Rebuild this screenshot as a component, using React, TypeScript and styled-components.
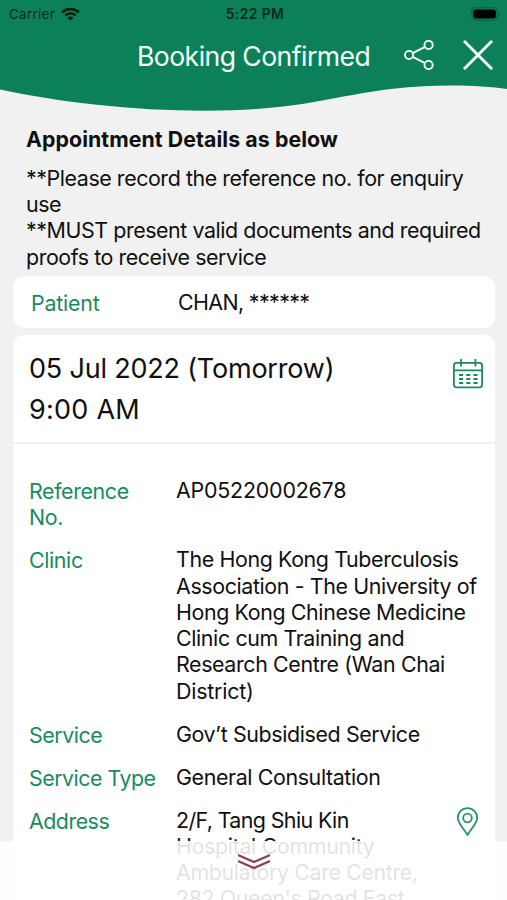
import React from "react";
import styled, { createGlobalStyle } from "styled-components";

const GREEN = "#0c8159";

const GlobalStyle = createGlobalStyle`
  * { box-sizing: border-box; }
  body {
    margin: 0;
    background: #f1f1f1;
    font-family: Inter, "Liberation Sans", sans-serif;
    color: #101010;
    overflow: hidden;
  }
  h1, h2, p, dl, dt, dd { margin: 0; font-weight: 400; }
`;

const Screen = styled.main`
  position: relative;
  display: flex;
  flex-direction: column;
  width: 507px;
  height: 900px;
  overflow: hidden;
  background: #f1f1f1;
`;

const Header = styled.header`
  display: grid;
  grid-template-columns: minmax(0, 1fr);
  grid-template-rows: 28px 56px 42px;
  height: 126px;
  flex: none;
`;

const StatusBar = styled.div`
  display: grid;
  grid-template-columns: 1fr auto 1fr;
  align-items: center;
  padding: 0 6px 0 9px;
  background: ${GREEN};
  color: #06291c;
`;

const Carrier = styled.div`
  display: flex;
  align-items: center;
  gap: 6px;
  font-size: 13.5px;
  letter-spacing: 0.25px;
`;

const Clock = styled.div`
  font-size: 13.8px;
  font-weight: 600;
  letter-spacing: 0.45px;
`;

const Battery = styled.svg`
  justify-self: end;
`;

const TitleBar = styled.div`
  display: grid;
  grid-template-columns: minmax(0, 1fr) 30px 30px;
  column-gap: 29px;
  align-items: center;
  padding: 0 14px 0 137px;
  background: ${GREEN};
  color: #f4fffa;
`;

const Title = styled.h1`
  font-size: 26.6px;
  line-height: 34px;
  letter-spacing: -0.56px;
  white-space: nowrap;
`;

const Wave = styled.svg`
  display: block;
`;

const IconButton = styled.button`
  display: flex;
  padding: 0;
  border: 0;
  background: none;
  color: inherit;
`;

const HeaderButton = styled(IconButton)`
  margin-top: -2px;
`;

const Notice = styled.section`
  padding: 0 12px 0 26px;
  height: 150px;
  flex: none;
`;

const NoticeTitle = styled.h2`
  font-size: 21.3px;
  line-height: 27px;
  font-weight: 700;
  letter-spacing: 0.08px;
`;

const NoticeText = styled.p`
  font-size: 21.4px;
  line-height: 26.2px;
  letter-spacing: -0.43px;
`;

const NoticeBody = styled.div`
  padding-top: 12px;
`;

const Card = styled.section`
  margin: 0 12px 0 13px;
  background: #fff;
  flex: none;
`;

const PatientCard = styled(Card)`
  display: grid;
  grid-template-columns: 147px 1fr;
  align-items: center;
  height: 52px;
  padding: 0 18px;
  border-radius: 11px;
  font-size: 21.4px;
  letter-spacing: -0.2px;
`;

const PatientName = styled.span`
  letter-spacing: -0.62px;
`;

const DateCard = styled(Card)`
  display: flex;
  justify-content: space-between;
  height: 109px;
  margin-top: 7px;
  padding: 13px 11px 0 16px;
  border-radius: 11px 11px 0 0;
  border-bottom: 2px solid #f2f2f2;
`;

const DateText = styled.div`
  font-size: 27px;
  line-height: 41px;
`;

const CalendarIcon = styled.svg`
  margin-top: 10px;
`;

const DetailsCard = styled(Card)`
  height: 470px;
  padding: 33px 11px 0 16px;
`;

const Details = styled.dl`
  display: flex;
  flex-direction: column;
  gap: 16.8px;
  font-size: 21.4px;
  line-height: 26.25px;
`;

const Row = styled.div`
  display: grid;
  grid-template-columns: 147px 1fr auto;
`;

const Label = styled.dt`
  color: #1b8a60;
  padding-top: 1px;
  margin-bottom: -1px;
`;

const Value = styled.dd``;

const Line = styled.span<{ $tracking?: number }>`
  display: block;
  white-space: nowrap;
  letter-spacing: ${(p) => p.$tracking ?? -0.38}px;
`;

const ScrollHint = styled.div`
  position: absolute;
  left: 0;
  right: 0;
  bottom: 0;
  height: 59px;
  display: flex;
  justify-content: center;
  padding-top: 12px;
  background: rgba(255, 255, 255, 0.88);
`;

type TextLine = { text: string; tracking?: number };
type Detail = { label: TextLine[]; value: TextLine[]; pin?: boolean };

const details: Detail[] = [
  {
    label: [{ text: "Reference" }, { text: "No." }],
    value: [{ text: "AP05220002678", tracking: -0.2 }],
  },
  {
    label: [{ text: "Clinic" }],
    value: [
      { text: "The Hong Kong Tuberculosis" },
      { text: "Association - The University of" },
      { text: "Hong Kong Chinese Medicine" },
      { text: "Clinic cum Training and" },
      { text: "Research Centre (Wan Chai" },
      { text: "District)", tracking: -0.2 },
    ],
  },
  {
    label: [{ text: "Service", tracking: -0.45 }],
    value: [{ text: "Gov’t Subsidised Service" }],
  },
  {
    label: [{ text: "Service Type", tracking: -0.5 }],
    value: [{ text: "General Consultation" }],
  },
  {
    label: [{ text: "Address", tracking: -0.5 }],
    value: [
      { text: "2/F, Tang Shiu Kin", tracking: -0.6 },
      { text: "Hospital Community", tracking: -0.33 },
      { text: "Ambulatory Care Centre," },
      { text: "282 Queen's Road East" },
    ],
    pin: true,
  },
];

const Lines = ({ lines }: { lines: TextLine[] }) => (
  <>
    {lines.map((l) => (
      <Line key={l.text} $tracking={l.tracking}>
        {l.text}
      </Line>
    ))}
  </>
);

const WifiIcon = () => (
  <svg width="19" height="14" viewBox="0 0 19 14" fill="none" stroke="#03170f">
    <path d="M1.2 5.3C5.8.8 13.2.8 17.8 5.3" strokeWidth="2.5" />
    <path d="M4.3 8.4c2.9-2.8 7.5-2.8 10.4 0" strokeWidth="2.3" />
    <path d="M9.5 13.6 6.6 10.7c1.6-1.5 4.2-1.5 5.8 0z" fill="#03170f" stroke="none" />
  </svg>
);

const PinIcon = () => (
  <svg width="23" height="30" viewBox="0 0 23 30" fill="none" stroke="#259468" strokeWidth="1.8">
    <path d="M11.5 28C8.8 22.5 1.8 17 1.8 10.8a9.7 9.7 0 0 1 19.4 0C21.2 17 14.2 22.5 11.5 28Z" strokeLinejoin="round" />
    <circle cx="11.5" cy="11" r="4.3" />
  </svg>
);

const PinButton = styled(IconButton)`
  height: 30px;
  margin: 0 5px 0 0;
`;

export default function App() {
  return (
    <Screen>
      <GlobalStyle />
      <Header>
        <StatusBar>
          <Carrier>
            Carrier <WifiIcon />
          </Carrier>
          <Clock>5:22 PM</Clock>
          <Battery width="30" height="14" viewBox="0 0 30 14">
            <rect x=".8" y=".8" width="25.6" height="12.4" rx="4" fill="none" stroke="#075b3e" strokeWidth="1.1" />
            <rect x="2.4" y="2.4" width="22.4" height="9.2" rx="2.4" fill="#000" />
            <path d="M28 5v4c1.5-.7 1.5-3.3 0-4z" fill="#075b3e" />
          </Battery>
        </StatusBar>
        <TitleBar>
          <Title>Booking Confirmed</Title>
          <HeaderButton aria-label="Share">
            <svg width="30" height="30" viewBox="0 0 30 30" fill="none" stroke="currentColor" strokeWidth="1.9">
              <circle cx="5.1" cy="15" r="4.1" />
              <circle cx="24.6" cy="4.9" r="4.1" />
              <circle cx="24.6" cy="25" r="4.1" />
              <path d="M8.8 13.1 21 6.8M8.8 16.9 21 23.2" />
            </svg>
          </HeaderButton>
          <HeaderButton aria-label="Close">
            <svg width="30" height="30" viewBox="0 0 30 30" stroke="currentColor" strokeWidth="2.9" strokeLinecap="round">
              <path d="M1.8 1.8 28.2 28.2M28.2 1.8 1.8 28.2" />
            </svg>
          </HeaderButton>
        </TitleBar>
        <Wave width="507" height="42" viewBox="0 -2 507 42">
          <path d="M0-3H507V3C479-1.2 436-2 393 2.7C336 9 300 24.7 205 24.7C132 24.7 58 16 0 3.5Z" fill={GREEN} />
        </Wave>
      </Header>
      <Notice>
        <NoticeTitle>Appointment Details as below</NoticeTitle>
        <NoticeBody>
          <NoticeText>
            **Please record the reference no. for enquiry
            <br />
            use
          </NoticeText>
          <NoticeText>
            **MUST present valid documents and required
            <br />
            proofs to receive service
          </NoticeText>
        </NoticeBody>
      </Notice>
      <PatientCard>
        <Label as="span">Patient</Label>
        <PatientName>CHAN, ******</PatientName>
      </PatientCard>
      <DateCard>
        <DateText>
          <Line $tracking={-0.2}>05 Jul 2022 (Tomorrow)</Line>
          <Line $tracking={0.25}>9:00 AM</Line>
        </DateText>
        <CalendarIcon width="32" height="32" viewBox="0 0 32 32" fill="none" stroke="#1b8a60" strokeWidth="1.8">
          <rect x="1.9" y="4.9" width="28.2" height="24.4" rx="2.5" />
          <path d="M2 12.3h28M9 1v7.6M23.4 1v7.6" />
          <path d="M7 17h4.2M14.2 17h4.2M21.4 17h4.2M7 21h4.2M14.2 21h4.2M21.4 21h4.2M7 25h4.2M14.2 25h4.2M21.4 25h4.2" />
        </CalendarIcon>
      </DateCard>
      <DetailsCard>
        <Details>
          {details.map((d) => (
            <Row key={d.label[0].text}>
              <Label>
                <Lines lines={d.label} />
              </Label>
              <Value>
                <Lines lines={d.value} />
              </Value>
              {d.pin && (
                <PinButton aria-label="Map">
                  <PinIcon />
                </PinButton>
              )}
            </Row>
          ))}
        </Details>
      </DetailsCard>
      <ScrollHint>
        <svg width="32" height="18" viewBox="0 0 32 18" fill="none" stroke="#8c3f5b" strokeWidth="2.2">
          <path d="M0 2 16 9 32 2M0 8 16 15 32 8" />
        </svg>
      </ScrollHint>
    </Screen>
  );
}
